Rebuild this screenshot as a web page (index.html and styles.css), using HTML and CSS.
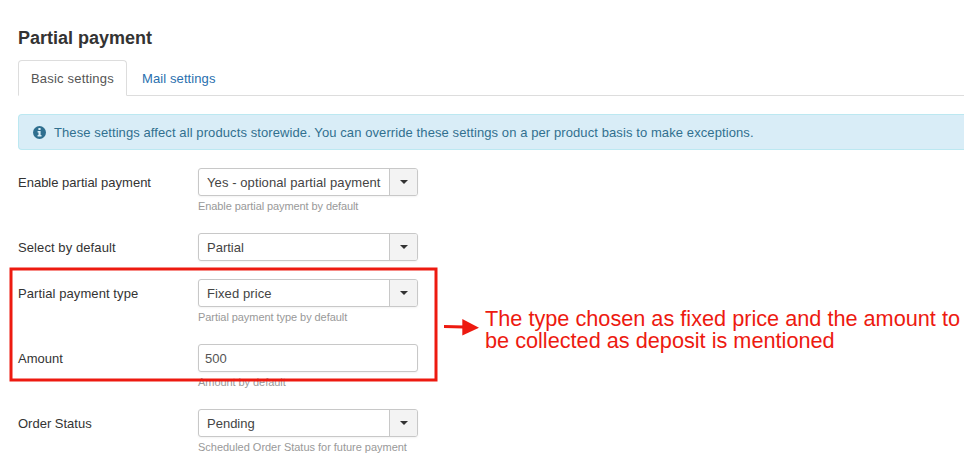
FILE: index.html
```
<!DOCTYPE html>
<html lang="en">
<head>
<meta charset="utf-8">
<title>Partial payment</title>
<link rel="stylesheet" href="styles.css">
</head>
<body>
<main class="panel">
  <h1 class="title">Partial payment</h1>
  <nav class="tabs">
    <a class="tab active">Basic settings</a>
    <a class="tab">Mail settings</a>
  </nav>
  <div class="alert">
    <svg class="info" viewBox="0 0 13 13"><circle cx="6.5" cy="6.5" r="6.5"/><path d="M5.4 2h2.2v1.9H5.4zM4.6 5h3v4h.9v1.500H4.600V9h.9V6.400h-.9z"/></svg>
    <span class="message">These settings affect all products storewide. You can override these settings on a per product basis to make exceptions.</span>
  </div>
  <form class="settings">
    <div class="row">
      <label>Enable partial payment</label>
      <div class="control">
        <div class="select"><span class="value wide">Yes - optional partial payment</span><span class="toggle"><i class="caret"></i></span></div>
        <p class="help enable-help">Enable partial payment by default</p>
      </div>
    </div>
    <div class="row">
      <label class="wide">Select by default</label>
      <div class="control">
        <div class="select"><span class="value">Partial</span><span class="toggle"><i class="caret"></i></span></div>
      </div>
    </div>
    <div class="row">
      <label class="wide">Partial payment type</label>
      <div class="control">
        <div class="select"><span class="value wide">Fixed price</span><span class="toggle"><i class="caret"></i></span></div>
        <p class="help">Partial payment type by default</p>
      </div>
    </div>
    <div class="row">
      <label>Amount</label>
      <div class="control">
        <div class="input">500</div>
        <p class="help">Amount by default</p>
      </div>
    </div>
    <div class="row">
      <label>Order Status</label>
      <div class="control">
        <div class="select"><span class="value">Pending</span><span class="toggle"><i class="caret"></i></span></div>
        <p class="help status-help">Scheduled Order Status for future payment</p>
      </div>
    </div>
  </form>
</main>
<svg class="highlight" viewBox="0 0 430 116"><rect x="2" y="3" width="425" height="111"/></svg>
<svg class="arrow" viewBox="0 0 36 18"><path d="M0 8.500 20 9" stroke="#ed1a10" stroke-width="3"/><path d="M18.300 1 35 9.700 18.300 17.500z" fill="#ed1a10"/></svg>
<p class="note">The type chosen as fixed price and the amount to<br>be collected as deposit is mentioned</p>
</body>
</html>
```
FILE: styles.css
```
* { box-sizing: border-box; }
body {
  margin: 0;
  height: 471px;
  overflow: hidden;
  position: relative;
  background: #fff;
  color: #333;
  font: 13px/18px "Liberation Sans", Arial, sans-serif;
}
.panel { padding: 20px 0 0 18px; }
.title {
  margin: 0;
  height: 40px;
  font-size: 18px;
  line-height: 36px;
  font-weight: bold;
}
.tabs {
  display: flex;
  height: 36px;
  border-bottom: 1px solid #ddd;
}
.tab {
  height: 36px;
  margin-right: 2px;
  padding: 9px 12px 7px;
  border: 1px solid transparent;
  color: #2a6fae;
  letter-spacing: .1px;
  white-space: nowrap;
}
.tab.active {
  width: 109px;
  color: #555;
  letter-spacing: .19px;
  background: #fff;
  border-color: #ddd #ddd #fff;
  border-radius: 4px 4px 0 0;
}
.alert {
  display: flex;
  align-items: center;
  height: 36px;
  margin-top: 18px;
  padding-left: 14px;
  border: 1px solid #bce8f1;
  border-right: 0;
  border-radius: 4px 0 0 4px;
  background: #d9edf7;
  color: #31708f;
  white-space: nowrap;
}
.message { padding-top: 2px; letter-spacing: .093px; }
.info { width: 13px; height: 13px; margin-right: 8px; }
.info circle { fill: #2f6f8f; }
.info path { fill: #d9edf7; }
.settings { margin-top: 18px; }
.row { display: flex; margin-bottom: 18px; }
.row label { width: 180px; padding-top: 6px; }
.wide { letter-spacing: .09px; }
.control { width: 220px; }
.select, .input {
  display: flex;
  height: 28px;
  border: 1px solid #c8c8c8;
  border-radius: 3px;
  background: #fff;
  color: #444;
  line-height: 28px;
  white-space: nowrap;
  box-shadow: 0 1px 2px rgba(0, 0, 0, .05);
}
.input { padding-left: 6px; color: #555; }
.value { flex: 1; padding-left: 8px; }
.toggle {
  display: flex;
  justify-content: center;
  width: 28px;
  padding-top: 11px;
  border-left: 1px solid #c8c8c8;
  border-radius: 0 2px 2px 0;
  background: #f3f3f3;
}
.caret {
  width: 0;
  height: 0;
  border: 4px solid transparent;
  border-top-color: #333;
  border-bottom: 0;
}
.help {
  margin: 0;
  height: 19px;
  padding-top: 1px;
  font-size: 11px;
  color: #999;
  letter-spacing: -.06px;
  white-space: nowrap;
}
.enable-help { letter-spacing: -.09px; }
.status-help { letter-spacing: -.02px; }
.highlight {
  position: absolute;
  left: 9px;
  top: 266px;
  width: 430px;
  height: 116px;
}
.highlight rect { fill: none; stroke: #ed1a10; stroke-width: 3px; }
.arrow { position: absolute; left: 444px; top: 318px; width: 36px; height: 18px; }
.note {
  position: absolute;
  left: 485px;
  top: 308px;
  margin: 0;
  color: #ed1a10;
  font-size: 21.7px;
  line-height: 22px;
  white-space: nowrap;
}
```
